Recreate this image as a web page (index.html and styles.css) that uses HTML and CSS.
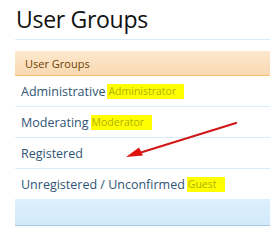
FILE: index.html
```html
<!DOCTYPE html>
<html lang="en">
<head>
    <meta charset="UTF-8">
    <title>User Groups</title>
    <link rel="stylesheet" href="styles.css">
</head>
<body>
    <div class="page">
        <h1 class="title">User Groups</h1>

        <div class="section">
            <h3 class="section-head">User Groups</h3>
            <ol class="group-list">
                <li class="group"><a href="#">Administrative</a> <span class="hl">Administrator</span></li>
                <li class="group"><a href="#">Moderating</a> <span class="hl">Moderator</span></li>
                <li class="group"><a href="#">Registered</a></li>
                <li class="group"><a href="#">Unregistered / Unconfirmed</a> <span class="hl">Guest</span></li>
            </ol>
            <div class="section-foot"></div>
        </div>
    </div>

    <!-- red annotation arrow drawn over the list -->
    <svg class="arrow" width="270" height="248" viewBox="0 0 270 248">
        <line x1="236" y1="123" x2="136" y2="154" stroke="#d01818" stroke-width="2.2" stroke-linecap="round"/>
        <polygon points="126,157 139,147.5 143,155.5" fill="#e01010"/>
    </svg>
</body>
</html>
```

FILE: styles.css
```css
body {
    margin: 0;
    padding: 0;
    background-color: #fff;
    font-family: "Open Sans", "DejaVu Sans", sans-serif;
}

.page {
    padding-left: 15px;
}

.title {
    margin: 0;
    padding: 4px 0 0 1px;
    height: 35px;
    font-family: "Open Sans", sans-serif;
    font-weight: normal;
    font-size: 23px;
    line-height: 30px;
    color: #111;
    border-bottom: 1px solid #d7edfc;
    letter-spacing: -0.3px;
}

.section {
    margin-top: 11px;
}

.section-head {
    margin: 0;
    height: 24px;
    padding-left: 10px;
    font-weight: normal;
    font-size: 11px;
    line-height: 25px;
    color: #6d3f03;
    background: linear-gradient(to bottom, #fde9cd, #f9d9b2);
    border-bottom: 1px solid #f9bc6d;
}

.group-list {
    list-style: none;
    margin: 0;
    padding: 0;
}

.group {
    height: 30px;
    padding-left: 6px;
    border-bottom: 1px solid #d7edfc;
    font-size: 12.5px;
    line-height: 31px;
    display: flex;
    align-items: center;
    gap: 2px;
}

.group:last-child {
    border-bottom: none;
}

.group a {
    color: #2f5474;
    text-decoration: none;
}

.hl {
    background-color: #ffff00;
    color: #b0b000;
    font-size: 10.5px;
    line-height: 15px;
    padding: 0 8px 0 1px;
}

.section-foot {
    height: 26px;
    background: linear-gradient(to bottom, #dcf0fd, #d2e9fa);
    border-bottom: 1px solid #a5cae4;
}

.arrow {
    position: absolute;
    left: 0;
    top: 0;
    pointer-events: none;
}
```
